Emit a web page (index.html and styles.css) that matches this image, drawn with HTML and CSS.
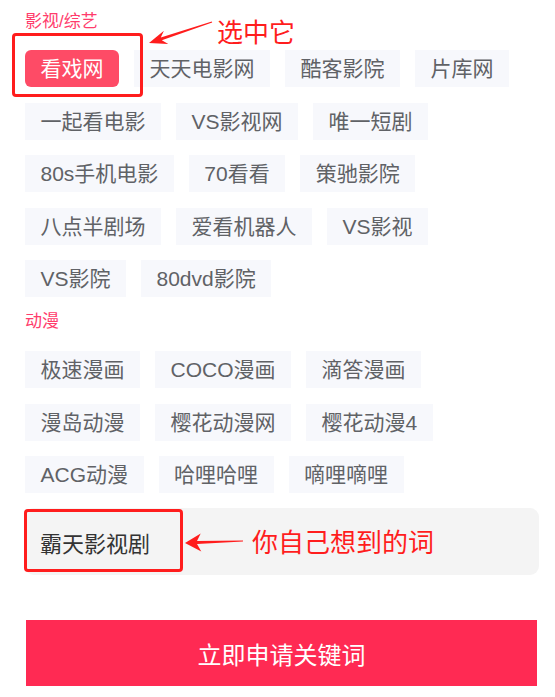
FILE: index.html
```html
<!DOCTYPE html>
<html lang="zh-CN">
<head>
<meta charset="utf-8">
<title>申请关键词</title>
<link rel="stylesheet" href="styles.css">
</head>
<body>
<div class="page">
  <section class="group">
    <div class="group-title">影视/综艺</div>
    <div class="tags">
      <span class="tag tag-active">看戏网</span>
      <span class="tag">天天电影网</span>
      <span class="tag">酷客影院</span>
      <span class="tag">片库网</span>
      <span class="tag">一起看电影</span>
      <span class="tag">VS影视网</span>
      <span class="tag">唯一短剧</span>
      <span class="tag">80s手机电影</span>
      <span class="tag">70看看</span>
      <span class="tag">策驰影院</span>
      <span class="tag">八点半剧场</span>
      <span class="tag">爱看机器人</span>
      <span class="tag">VS影视</span>
      <span class="tag">VS影院</span>
      <span class="tag">80dvd影院</span>
    </div>
  </section>
  <section class="group group-second">
    <div class="group-title">动漫</div>
    <div class="tags">
      <span class="tag">极速漫画</span>
      <span class="tag">COCO漫画</span>
      <span class="tag">滴答漫画</span>
      <span class="tag">漫岛动漫</span>
      <span class="tag">樱花动漫网</span>
      <span class="tag">樱花动漫4</span>
      <span class="tag">ACG动漫</span>
      <span class="tag">哈哩哈哩</span>
      <span class="tag">嘀哩嘀哩</span>
    </div>
  </section>
  <div class="custom"><span class="custom-text">霸天影视剧</span></div>
  <button class="submit" type="button">立即申请关键词</button>

  <div class="mark mark-select"></div>
  <div class="mark mark-custom"></div>
  <div class="note note-select">选中它</div>
  <div class="note note-custom">你自己想到的词</div>
  <svg class="arrows" width="555" height="697" viewBox="0 0 555 697" aria-hidden="true">
    <polygon fill="#ff1d1d" points="149,43 168.3,43.9 161.8,40.3 212.2,22.5 211.8,21.5 160.8,37.5 163.9,30.7"/>
    <polygon fill="#ff1d1d" points="185,543 201.3,551.5 197,544.1 243,541.6 243,540.4 197,541.1 200.7,533.5"/>
  </svg>
</div>
</body>
</html>
```
FILE: styles.css
```css
html, body {
  margin: 0;
  padding: 0;
  background: #ffffff;
}

body {
  font-family: "Liberation Sans", "Noto Sans CJK SC", sans-serif;
}

.page {
  position: relative;
  width: 555px;
  height: 697px;
  box-sizing: border-box;
  padding: 10px 16px 0 25px;
  overflow: hidden;
}

.group-title {
  font-size: 17px;
  line-height: 24px;
  color: #ff3c6c;
  margin-bottom: 16px;
}

.group-second {
  margin-top: 13px;
}

.group-second .group-title {
  margin-bottom: 17px;
}

.tags {
  display: flex;
  flex-wrap: wrap;
  column-gap: 15px;
  row-gap: 15.5px;
}

.tag {
  display: flex;
  align-items: center;
  height: 37px;
  padding: 0 15.5px;
  background: #f7f8fc;
  color: #606266;
  font-size: 21px;
  line-height: 37px;
  white-space: nowrap;
}

.tag-active {
  background: #fe4b66;
  color: #ffffff;
  border-radius: 6px;
}

.custom {
  margin-top: 15px;
  height: 67px;
  background: #f4f4f4;
  border-radius: 9px;
  display: flex;
  align-items: center;
  padding-left: 15px;
}

.custom-text {
  font-size: 22px;
  color: #333333;
}

.submit {
  display: block;
  margin: 45px 2px 0 1px;
  width: 511px;
  height: 66px;
  border: none;
  background: #ff2a53;
  color: #ffffff;
  font-family: "Liberation Sans", "Noto Sans CJK SC", sans-serif;
  font-size: 24px;
  padding: 0;
}

.mark {
  position: absolute;
  border: 3px solid #ff1d1d;
  border-radius: 4px;
  box-sizing: border-box;
}

.mark-select {
  left: 12px;
  top: 33px;
  width: 131px;
  height: 64px;
}

.mark-custom {
  left: 24px;
  top: 509px;
  width: 159px;
  height: 63px;
}

.note {
  position: absolute;
  color: #ff1d1d;
  font-size: 26px;
  line-height: 30px;
  white-space: nowrap;
}

.note-select {
  left: 217px;
  top: 18px;
}

.note-custom {
  left: 252px;
  top: 528px;
}

.arrows {
  position: absolute;
  left: 0;
  top: 0;
  pointer-events: none;
}
```
